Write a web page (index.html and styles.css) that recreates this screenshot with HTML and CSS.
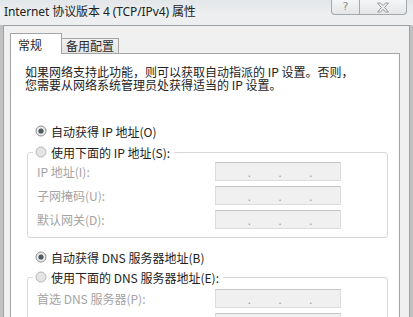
FILE: index.html
```html
<!DOCTYPE html>
<html lang="zh-CN">
<head>
<meta charset="utf-8">
<link rel="stylesheet" href="styles.css">
</head>
<body>
<div class="screen">
  <div class="titlebar">
    <span class="title">Internet 协议版本 4 (TCP/IPv4) 属性</span>
    <div class="caption-btns">
      <div class="cbtn help">?</div>
      <div class="cbtn close">
        <svg width="14" height="11" viewBox="0 0 14 11"><path d="M1.5 1 H4.5 L7 3.6 L9.5 1 H12.5 L8.6 5.5 L12.5 10 H9.5 L7 7.4 L4.5 10 H1.5 L5.4 5.5 Z" fill="none" stroke="#9a9a9a" stroke-width="1"/></svg>
      </div>
    </div>
  </div>
  <div class="window">
    <div class="tabs">
      <div class="tab active">常规</div>
      <div class="tab">备用配置</div>
    </div>
    <div class="panel">
      <p class="desc">如果网络支持此功能，则可以获取自动指派的 IP 设置。否则，<br>您需要从网络系统管理员处获得适当的 IP 设置。</p>

      <div class="radio first">
        <svg class="rb" width="12" height="12" viewBox="0 0 12 12"><circle cx="6" cy="6" r="5" fill="#ececec" stroke="#8e8e8e"/><circle cx="6" cy="6" r="2.6" fill="#4d5b60"/></svg>
        <span>自动获得 IP 地址(O)</span>
      </div>

      <fieldset class="group g1">
        <legend class="radio">
          <svg class="rb" width="12" height="12" viewBox="0 0 12 12"><circle cx="6" cy="6" r="5" fill="#e4e4e4" stroke="#b8b8b8"/></svg>
          <span>使用下面的 IP 地址(S):</span>
        </legend>
        <div class="row"><span class="lbl">IP 地址(I):</span><div class="ipbox"><i>.</i><i>.</i><i>.</i></div></div>
        <div class="row"><span class="lbl">子网掩码(U):</span><div class="ipbox"><i>.</i><i>.</i><i>.</i></div></div>
        <div class="row"><span class="lbl">默认网关(D):</span><div class="ipbox"><i>.</i><i>.</i><i>.</i></div></div>
      </fieldset>

      <div class="radio second">
        <svg class="rb" width="12" height="12" viewBox="0 0 12 12"><circle cx="6" cy="6" r="5" fill="#ececec" stroke="#8e8e8e"/><circle cx="6" cy="6" r="2.6" fill="#4d5b60"/></svg>
        <span>自动获得 DNS 服务器地址(B)</span>
      </div>

      <fieldset class="group g2">
        <legend class="radio">
          <svg class="rb" width="12" height="12" viewBox="0 0 12 12"><circle cx="6" cy="6" r="5" fill="#e4e4e4" stroke="#b8b8b8"/></svg>
          <span>使用下面的 DNS 服务器地址(E):</span>
        </legend>
        <div class="row"><span class="lbl">首选 DNS 服务器(P):</span><div class="ipbox"><i>.</i><i>.</i><i>.</i></div></div>
        <div class="row"><span class="lbl">备用 DNS 服务器(A):</span><div class="ipbox"><i>.</i><i>.</i><i>.</i></div></div>
      </fieldset>
    </div>
  </div>
</div>
</body>
</html>
```

FILE: styles.css
```css
html, body {
  margin: 0;
  padding: 0;
}
body {
  width: 413px;
  height: 317px;
  overflow: hidden;
  background: #bfc1c3;
  font-family: "Noto Sans CJK SC", "Noto Sans", sans-serif;
  font-size: 12px;
  color: #1f1f1f;
}
.screen {
  width: 413px;
  height: 317px;
  overflow: hidden;
  display: flex;
  flex-direction: column;
}
.titlebar {
  height: 25px;
  flex: none;
  display: flex;
  justify-content: space-between;
  align-items: flex-start;
  padding: 0 6px 0 4px;
  background: linear-gradient(#e3e6e9, #edeff1 60%, #eceef0);
}
.title {
  padding-top: 5px;
  line-height: 14px;
  font-size: 12px;
  font-family: "Noto Sans", "Noto Sans CJK SC", sans-serif;
  color: #222;
  letter-spacing: -0.1px;
}
.caption-btns {
  display: flex;
}
.cbtn {
  height: 14px;
  border: 1px solid #a3a8ad;
  border-top: none;
  background: linear-gradient(#f4f5f6, #e4e6e8);
  display: flex;
  align-items: center;
  justify-content: center;
}
.help {
  width: 27px;
  border-radius: 0 0 0 4px;
  color: #8d8d8d;
  font-family: "DejaVu Sans", sans-serif;
  font-size: 11px;
  line-height: 14px;
}
.close {
  width: 46px;
  border-left: none;
  border-radius: 0 0 4px 0;
}
.window {
  flex: 1;
  margin: 0 3px 0 3px;
  border: 1px solid #9ea1a4;
  background: #f0f0f0;
  padding: 0 0 0 6px;
}
.tabs {
  height: 27px;
  display: flex;
  align-items: flex-end;
}
.tab {
  height: 14px;
  border: 1px solid #a4a4a4;
  border-bottom: none;
  border-left: none;
  padding: 0 4px;
  line-height: 14px;
  background: linear-gradient(#f2f2f2, #e3e3e3);
  color: #2a2a2a;
  white-space: nowrap;
}
.tab.active {
  position: relative;
  z-index: 1;
  margin-bottom: -1px;
  border-left: 1px solid #a4a4a4;
  background: #fff;
  padding: 4px 0 0 7px;
  box-sizing: border-box;
  height: 21px;
  width: 52px;
}
.panel {
  width: 390px;
  box-sizing: border-box;
  height: 300px;
  border: 1px solid #a4a4a4;
  background: #fff;
  padding-top: 11px;
}
.desc {
  margin: 0 0 0 14px;
  line-height: 13px;
  font-size: 12px;
  color: #222;
  white-space: nowrap;
}
.radio {
  display: flex;
  align-items: center;
  height: 18px;
  color: #222;
  white-space: nowrap;
}
.rb {
  flex: none;
  margin-right: 4px;
}
.radio.first {
  margin: 31px 0 0 24px;
}
.radio.second {
  margin: 10px 0 0 24px;
}
.group {
  margin: 3px 11px 0 16px;
  border: 1px solid #d6d9dc;
  border-radius: 3px;
  padding: 1px 0 8px 0;
}
.group.g2 {
  margin-top: 2px;
  padding-top: 3px;
}
.group legend.radio {
  margin-left: 5px;
  padding: 0 4px 0 2px;
  background: #fff;
}
.row {
  display: flex;
  align-items: center;
  height: 19px;
  padding-left: 9px;
}
.row + .row {
  margin-top: 5px;
}
.lbl {
  width: 178px;
  line-height: 19px;
  color: #a3a3a3;
}
.ipbox {
  width: 126px;
  height: 19px;
  box-sizing: border-box;
  border: 1px solid #dcdcdc;
  border-top-color: #c4c4c4;
  background: #f0f0f0;
  display: flex;
  justify-content: space-evenly;
  align-items: center;
  padding-left: 4px;
}
.ipbox i {
  font-style: normal;
  color: #9a9a9a;
  line-height: 12px;
  font-size: 11px;
}
```
